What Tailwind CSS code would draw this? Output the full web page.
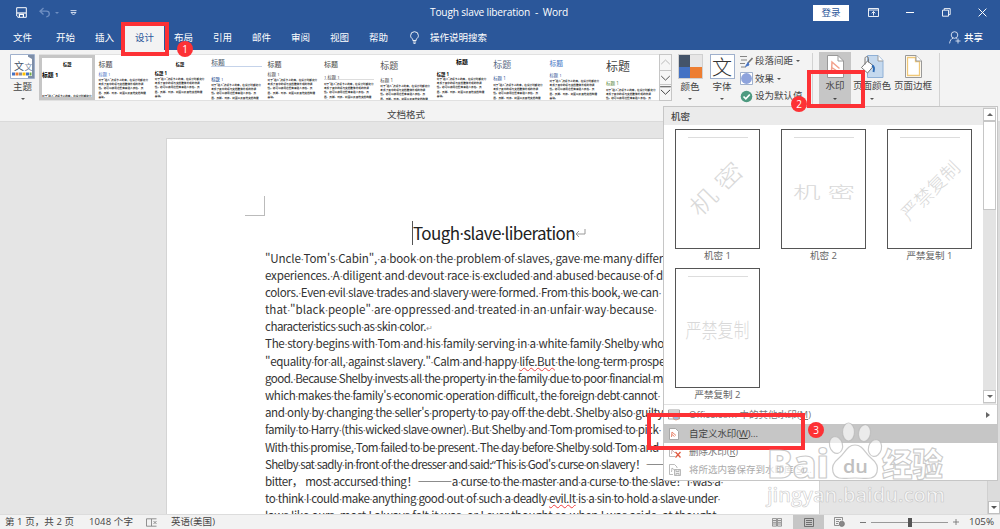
<!DOCTYPE html>
<html lang="zh-CN">
<head>
    <meta charset="UTF-8">
    <meta name="viewport" content="width=device-width, initial-scale=1.0">
    <script src="https://cdn.jsdelivr.net/npm/@tailwindcss/browser@4"></script>
    <title>Tough slave liberation - Word</title>
</head>
<body class="font-['Open_Sans','Noto_Sans_CJK_SC',sans-serif] text-[9.5px] leading-[12px] text-[#444]">
<div class="relative w-[1000px] h-[529px] overflow-hidden flex flex-col bg-[#e5e5e5]">

    <!-- Title bar -->
    <header class="h-[25px] shrink-0 bg-[#2b579a] text-white flex items-center relative">
        <svg class="ml-4 w-[11px] h-[11px]" viewBox="0 0 11 11" fill="none" stroke="#fff"><path d="M.7.7h9.6v9.6H2L.7 9z"/><path d="M1 6h9" stroke-width="1.2"/><path d="M3.4 10V7.3h4V10" stroke-width="1.2"/></svg>
        <svg class="ml-[12px] w-[12px] h-[11px]" viewBox="0 0 12 11" fill="none" stroke="#6f8fc2" stroke-width="1.3"><path d="M4.5 1 1 4.2l3.5 3.2M1 4.2h6.3c4 0 4 5.6 0 5.6"/></svg>
        <span class="ml-[4px] border-x-2 border-x-transparent border-t-2 border-t-[#6f8fc2]"></span>
        <svg class="ml-[11px] w-[7px] h-[6px]" viewBox="0 0 7 6" fill="none" stroke="#dfe7f5" stroke-width=".9"><path d="M.5.6h6M1 2.5h5L3.500 5z"/></svg>
        <span class="absolute left-[430px] top-[6px] text-[10.2px] whitespace-pre" data-fit="138">Tough slave liberation  -  Word</span>
        <div class="ml-auto flex items-center">
            <button class="bg-white text-[#2b579a] w-[36px] h-[16px] mr-[19px] text-[9.5px]">登录</button>
            <svg class="w-[11px] h-[9px] mr-[27px]" viewBox="0 0 11 9" fill="none" stroke="#fff" stroke-width=".9"><path d="M.5.5h10v8H.5zM.5 2h10M5.500 7.500V3.600M3.700 5.300l1.800-1.800 1.800 1.800"/></svg>
            <svg class="w-[8px] h-[9px] mr-[28px]" viewBox="0 0 8 9" stroke="#fff"><path d="M0 4.500h8"/></svg>
            <svg class="w-[9px] h-[9px] mr-[27px]" viewBox="0 0 9 9" fill="none" stroke="#fff" stroke-width=".9"><path d="M.5 2.200h6v6h-6zM2.200 2V.6h6v6H6.800"/></svg>
            <svg class="w-[9px] h-[9px] mr-[13px]" viewBox="0 0 9 9" stroke="#fff"><path d="m.6.6 7.800 7.800M8.400.6.6 8.400"/></svg>
        </div>
    </header>

    <!-- Tabs -->
    <nav class="h-[25px] shrink-0 bg-[#2b579a] text-white flex items-stretch leading-[25px]">
        <a class="ml-[13px] w-[43px]">文件</a>
        <a class="w-[39px]">开始</a>
        <a class="w-[30px]">插入</a>
        <a class="w-[39px] bg-[#f3f3f3] text-[#2b579a] text-center">设计</a>
        <a class="ml-[10px] w-[39px]">布局</a>
        <a class="w-[39px]">引用</a>
        <a class="w-[39px]">邮件</a>
        <a class="w-[39px]">审阅</a>
        <a class="w-[39px]">视图</a>
        <a class="w-[41px]">帮助</a>
        <svg class="self-center w-[9px] h-[13px] mr-[11px]" viewBox="0 0 9 13" fill="none" stroke="#fff" stroke-width=".9"><path d="M2.800 9.500V8.300C1.500 7.300.6 6.200.6 4.600a3.900 3.900 0 0 1 7.800 0c0 1.600-.9 2.700-2.200 3.700v1.200zM2.900 11h3.200M3.500 12.400h2"/></svg>
        <span>操作说明搜索</span>
        <svg class="ml-auto self-center w-[12px] h-[13px] mr-[3px]" viewBox="0 0 12 13" fill="none" stroke="#dfe7f5" stroke-width=".9"><circle cx="5.500" cy="4" r="3.300"/><path d="M.6 12.400c.3-3 1.800-4.900 3.600-5.300M6.800 7.100l1 .8M9 7.500v5M6.500 10h5"/></svg>
        <span class="mr-[17px] font-medium">共享</span>
    </nav>

    <!-- Ribbon -->
    <section class="h-[72px] shrink-0 bg-[#f3f3f3] border-b border-[#dadada] flex items-start">
        <div class="ml-[10px] w-[25px] mt-[4px] flex flex-col items-center">
            <svg class="w-[25px] h-[25px]" viewBox="0 0 25 25"><path d="M.5.5h24v24H.5z" fill="#fff" stroke="#9fb0cc"/><path d="M18 1h6v23h-6z" fill="#7d8ea8"/><path d="M15 1l7 4v17H15z" fill="#fff"/><text x="4" y="16" font-size="10" fill="#44546a" font-family="Noto Sans CJK SC">文</text><text x="14.500" y="16" font-size="8" fill="#7588a4" font-family="Noto Sans CJK SC">文</text><path d="M2 18.500h3v3H2z" fill="#4472c4"/><path d="M5.500 18.500h3v3h-3z" fill="#ed7d31"/><path d="M9 18.500h3v3H9z" fill="#8a8f98"/><path d="M12.500 18.500h3v3h-3z" fill="#ffc000"/><path d="M16 18.500h3v3h-3z" fill="#4472c4"/><path d="M19.500 18.500h2v3h-2z" fill="#70ad47"/></svg>
            <span class="mt-[2px]">主题</span>
            <span class="mt-[5px] border-x-2 border-x-transparent border-t-2 border-t-[#555]"></span>
        </div>
        <div class="ml-[4px] w-[620px]">
            <div class="mt-[4px] h-[47px] flex bg-white border-y border-[#e1e1e1] overflow-hidden" id="gallery"></div>
            <div class="mt-[8px] pl-[348px] text-[9.5px]">文档格式</div>
        </div>
        <div class="mt-[4px] w-[13px] h-[47px] border border-[#c6c6c6] bg-[#f6f6f6] flex flex-col divide-y divide-[#c6c6c6]">
            <svg class="h-[16px]" viewBox="0 0 11 16" fill="none" stroke="#b5b5b5"><path d="m.8 10 4.700-4.500L10.200 10"/></svg>
            <svg class="h-[15px]" viewBox="0 0 11 15" fill="none" stroke="#444"><path d="m.8 5.500 4.700 4.500 4.700-4.500"/></svg>
            <svg class="h-[15px]" viewBox="0 0 11 15" fill="none" stroke="#444"><path d="M0 1.800h11M.8 5l4.700 4.500L10.200 5"/></svg>
        </div>
        <div class="ml-[5px] w-[26px] mt-[4px] flex flex-col items-center">
            <div class="grid grid-cols-2 w-[25px] h-[25px] border border-[#d0d0d0]">
                <i class="bg-[#44546a]"></i><i class="bg-[#e7e6e6]"></i><i class="bg-[#4472c4]"></i><i class="bg-[#ed7d31]"></i>
            </div>
            <span class="mt-[2px]">颜色</span>
            <span class="mt-[5px] border-x-2 border-x-transparent border-t-2 border-t-[#555]"></span>
        </div>
        <div class="ml-[6px] w-[26px] mt-[4px] flex flex-col items-center">
            <div class="w-[25px] h-[25px] border border-[#9fb0cc] bg-white text-[20px] leading-[23px] text-center text-[#333] font-light"><span class="font-['Noto_Sans_CJK_SC',sans-serif]">文</span></div>
            <span class="mt-[2px]">字体</span>
            <span class="mt-[5px] border-x-2 border-x-transparent border-t-2 border-t-[#555]"></span>
        </div>
        <div class="ml-[5px] mt-[2px] w-[72px] flex flex-col whitespace-nowrap">
            <div class="h-[18px] flex items-center">
                <svg class="w-[13px] h-[13px] mr-[2px]" viewBox="0 0 13 13" fill="none" stroke="#777" stroke-width=".9"><path d="M0 1.500h7M1 5h6M0 8.500h5M1 12h5"/><path d="M12.500 3 8 8" stroke-width="1.600"/><path d="M8 7.500 5.500 11.500 9 10z" fill="#4472c4" stroke="#4472c4"/></svg>
                段落间距<span class="ml-[3px] border-x-2 border-x-transparent border-t-2 border-t-[#555]"></span>
            </div>
            <div class="h-[17px] flex items-center">
                <svg class="w-[13px] h-[13px] mr-[2px]" viewBox="0 0 13 13"><path d="M.5.5h12v12H.5z" fill="#fff" stroke="#9fb0cc"/><circle cx="6.500" cy="6.500" r="5.400" fill="#8ea3dc"/></svg>
                效果<span class="ml-[3px] border-x-2 border-x-transparent border-t-2 border-t-[#555]"></span>
            </div>
            <div class="h-[18px] flex items-center">
                <svg class="w-[13px] h-[13px] mr-[2px]" viewBox="0 0 13 13"><circle cx="6.500" cy="6.500" r="5.800" fill="#4e9a80"/><path d="m3.500 6.500 2.300 2.300 4-4.300" fill="none" stroke="#fff" stroke-width="1.700"/></svg>
                设为默认值
            </div>
        </div>
        <div class="mt-[3px] h-[54px] border-l border-[#d2d2d2]"></div>
        <div class="ml-[6px] mt-[2px] w-[32px] h-[54px] bg-[#c6c6c6] flex flex-col items-center">
            <svg class="mt-[3px] w-[17px] h-[23px]" viewBox="0 0 17 23"><path d="M.5.5H11l5.500 5.500v16.500H.5z" fill="#fff" stroke="#999"/><path d="M11 .5V6h5.500" fill="none" stroke="#999"/><path d="M4.500 17 5 7l7.500 6.500M4.800 12.500l4.500 3" fill="none" stroke="#f2a18c" stroke-width="1.500"/></svg>
            <span class="mt-[2px]">水印</span>
            <span class="mt-[6px] border-x-2 border-x-transparent border-t-2 border-t-[#444]"></span>
        </div>
        <div class="ml-px w-[40px] mt-[2px] flex flex-col items-center whitespace-nowrap">
            <svg class="mt-[3px] w-[24px] h-[23px]" viewBox="0 0 24 23"><path d="M7.500.5H18l5 5v17H7.500z" fill="#c5d9ee" stroke="#8fb0d6"/><path d="M18 .5V6h5" fill="#fff" stroke="#999"/><path d="m1.500 12.500 6-6.500 6 5-6 7z" fill="#fff" stroke="#777"/><path d="M5 9.500V3.500c0-2.500 3.500-2.500 3.500 0v4" fill="none" stroke="#777"/><path d="M12 10.500c2.500 1 2.500 3 1.500 6.500" fill="none" stroke="#2f6cb5" stroke-width="2"/></svg>
            <span class="mt-[2px]">页面颜色</span>
            <span class="mt-[6px] border-x-2 border-x-transparent border-t-2 border-t-[#555]"></span>
        </div>
        <div class="ml-px w-[40px] mt-[2px] flex flex-col items-center whitespace-nowrap">
            <svg class="mt-[3px] w-[17px] h-[23px]" viewBox="0 0 17 23"><path d="M.5.5H11l5.500 5.500v16.500H.5z" fill="#fff" stroke="#999"/><path d="M2.500 2.500h8v4h4v14h-12z" fill="none" stroke="#f0c878" stroke-width="1.300"/><path d="M11 .5V6h5.500" fill="#fff" stroke="#999"/></svg>
            <span class="mt-[2px]">页面边框</span>
        </div>
        <div class="ml-[6px] mt-[3px] h-[54px] border-l border-[#d2d2d2]"></div>
    </section>

    <!-- Document -->
    <main class="flex-1 min-h-0 flex overflow-hidden">
        <article class="ml-[166px] mt-[16px] w-[654px] bg-white border border-b-0 border-[#d4d4d4] shrink-0 overflow-hidden text-[#333] font-['Noto_Sans_CJK_SC',sans-serif]">
            <div class="ml-[78px] mt-[57px] w-[20px] h-[20px] border-r border-b border-[#bbb]"></div>
            <h1 class="ml-[245px] mt-[5px] h-[24px] flex items-center border-l border-[#555] text-[17px] leading-[24px] text-[#222]"><span data-fit="162" class="whitespace-pre">Tough<b class="font-normal font-['Open_Sans']">·</b>slave<b class="font-normal font-['Open_Sans']">·</b>liberation</span><svg class="w-[11px] h-[9px]" viewBox="0 0 11 9" fill="none" stroke="#999"><path d="M10 0v5H1M4 2 1 5l3 3"/></svg></h1>
            <div class="ml-[98px] mt-[4.500px] text-[11.6px]" id="doc"></div>
        </article>
        <div class="ml-auto w-[13px] bg-[#dcdcdc] border-l border-[#d0d0d0] flex flex-col justify-end">
            <div class="h-[13px] bg-white border border-[#c0c0c0] flex items-center justify-center"><span class="border-x-3 border-x-transparent border-t-3 border-t-[#555]"></span></div>
        </div>
    </main>

    <!-- Status bar -->
    <footer class="h-[15px] shrink-0 bg-[#f2f2f2] border-t border-[#dcdcdc] flex items-center whitespace-nowrap">
        <span class="ml-[5px] w-[84px]"><span data-fit="69" class="inline-block">第 1 页，共 2 页</span></span>
        <span class="w-[57px]"><span data-fit="44" class="inline-block">1048 个字</span></span>
        <svg class="w-[12px] h-[9px] mr-[13px]" viewBox="0 0 12 9" fill="none" stroke="#777" stroke-width=".8"><path d="M.5.8h5v7.400h-5zM5.500.8h5M5.500 8.200h5M7.500 3l3 3M10.500 3l-3 3"/></svg>
        <span data-fit="44" class="inline-block">英语(美国)</span>
        <div class="ml-auto flex items-center h-full">
            <svg class="w-[10px] h-[9px] mr-[11px]" viewBox="0 0 10 9" fill="none" stroke="#777" stroke-width=".8"><path d="M.4.600h4.200v7.500H.4zM5.400.600h4.200v7.500H5.400zM1 2.500h3M1 4.300h3M1 6h3M6 2.500h3M6 4.300h3M6 6h3"/></svg>
            <div class="w-[31px] h-full bg-[#c6c6c6] flex items-center justify-center">
                <svg class="w-[10px] h-[9px]" viewBox="0 0 10 9" fill="none" stroke="#666" stroke-width=".9"><path d="M.5.5h9v8h-9zM2 2.500h6M2 4.500h6M2 6.500h6"/></svg>
            </div>
            <svg class="ml-[10px] w-[11px] h-[10px]" viewBox="0 0 11 10" fill="none" stroke="#777" stroke-width=".8"><path d="M5 8.500H.5v-8h8v3M2 2.500h5M2 4.500h3M2 6.500h2"/><circle cx="7.800" cy="6.800" r="2.600" fill="#888"/></svg>
            <span class="ml-[15px] w-[6px] border-t border-[#777]"></span>
            <div class="ml-[5px] w-[77px] h-[9px] flex items-center relative"><span class="w-full border-t border-[#999]"></span><span class="absolute left-[37px] w-[4px] h-[9px] bg-[#555]"></span></div>
            <svg class="ml-[5px] w-[6px] h-[6px]" viewBox="0 0 6 6" stroke="#777" stroke-width=".9"><path d="M0 3h6M3 0v6"/></svg>
            <span class="ml-[10px] mr-[6px] text-[9.8px]" data-fit="25">105%</span>
        </div>
    </footer>

    <!-- Watermark menu -->
    <div class="absolute left-[663px] top-[106px] w-[335px] h-[375px] bg-white border border-[#c6c6c6] flex flex-col whitespace-nowrap">
        <div class="h-[298px] flex border-b border-[#e1e1e1]">
            <div class="w-[319px]">
                <div class="h-[18px] bg-[#ebebeb] pl-[7px] leading-[19px] font-medium text-[#444]">机密</div>
                <div class="grid grid-cols-[106px_106px_106px] auto-rows-[139px] pl-[11px] pt-[4px] text-[#666]" id="cards"></div>
            </div>
            <div class="w-[13px] ml-auto mr-px bg-[#e3e3e3] flex flex-col">
                <div class="mt-px h-[13px] bg-white border border-[#c6c6c6] flex items-center justify-center"><span class="border-x-3 border-x-transparent border-b-3 border-b-[#666]"></span></div>
                <div class="h-[89px] bg-white border border-[#c6c6c6]"></div>
                <div class="mt-auto mb-px h-[13px] bg-white border border-[#c6c6c6] flex items-center justify-center"><span class="border-x-3 border-x-transparent border-t-3 border-t-[#666]"></span></div>
            </div>
        </div>
        <div class="h-[19px] flex items-center pl-[4px] text-[#777]">
            <svg class="w-[12px] h-[12px] mr-[9px]" viewBox="0 0 12 12" fill="none" stroke="#999" stroke-width=".9"><path d="M.5 1h11v9H.5zM.5 3h11M2 5h4M2 7h3"/><circle cx="8" cy="8" r="3" fill="#9db8de" stroke="#d99a80"/></svg>
            <span data-fit="122">Office.com 中的其他水印(<u>M</u>)</span>
            <span class="ml-auto mr-[7px] border-y-3 border-y-transparent border-l-4 border-l-[#666]"></span>
        </div>
        <div class="h-[19px] flex items-center pl-[5px] bg-[#c6c6c6]">
            <svg class="w-[10px] h-[12px] mr-[10px]" viewBox="0 0 10 12"><path d="M.5.500h6l3 3v8h-9z" fill="#fff" stroke="#999" stroke-width=".8"/><path d="m2.500 9 .5-5 4 3.500M3 6.500l2.500 2" fill="none" stroke="#e8846c"/></svg>
            <span data-fit="69">自定义水印(<u>W</u>)...</span>
        </div>
        <div class="h-[18px] flex items-center pl-[5px] text-[#777]">
            <svg class="w-[12px] h-[12px] mr-[8px]" viewBox="0 0 12 12" fill="none"><path d="M8 4V.500H.5v10H6" stroke="#aaa" stroke-width=".8"/><path d="m2.500 8 .5-4 3 3" stroke="#c9a0a0" stroke-width=".8"/><path d="m6.500 6 5 5.500M11.500 6l-5 5.500" stroke="#e05a40" stroke-width="1.300"/></svg>
            <span data-fit="49">删除水印(<u>R</u>)</span>
        </div>
        <div class="h-[18px] flex items-center pl-[5px] text-[#aaa]">
            <svg class="w-[12px] h-[12px] mr-[8px]" viewBox="0 0 12 12" fill="none" stroke="#aaa" stroke-width=".8"><path d="M8 4V3L5.500.500h-5v10H4M2.500 8 3 4l3 2.500"/><path d="M5.500 5.500h6v6h-6z" fill="#eee"/><path d="M7 5.500v2h3v-2M7 11.500v-2h3v2"/></svg>
            <span>将所选内容保存到水印库(<u>S</u>)...</span>
        </div>
    </div>

    <!-- Annotations -->
    <div class="absolute left-[121px] top-[22px] w-[48px] h-[34px] border-4 border-[#fd3135]"></div>
    <div class="absolute left-[807px] top-[70px] w-[58px] h-[38px] border-4 border-[#fd3135]"></div>
    <div class="absolute left-[647px] top-[413px] w-[158px] h-[37px] border-4 border-[#fd3135]"></div>
    <div class="absolute left-[177px] top-[41px] size-[16px] rounded-full bg-[#fd3135] text-white text-[10px] leading-[16px] text-center">1</div>
    <div class="absolute left-[791px] top-[96px] size-[16px] rounded-full bg-[#fd3135] text-white text-[10px] leading-[16px] text-center">2</div>
    <div class="absolute left-[808px] top-[422px] size-[16px] rounded-full bg-[#fd3135] text-white text-[10px] leading-[16px] text-center">3</div>

    <!-- Site logo -->
    <svg class="absolute left-[760px] top-[415px] w-[200px] h-[100px]" viewBox="0 0 200 100" font-family="Open Sans, Noto Sans CJK SC, sans-serif" font-weight="800" stroke-linejoin="round">
        <g fill="#fff" fill-opacity=".65" stroke="#b9b9b9" stroke-opacity=".75" stroke-width="1.200">
            <text x="7" y="63" font-size="38" textLength="62" lengthAdjust="spacingAndGlyphs">Bai</text>
            <ellipse cx="88.500" cy="17" rx="6" ry="9"/>
            <ellipse cx="104.500" cy="18" rx="6" ry="8.500" transform="rotate(10 104 18)"/>
            <ellipse cx="76" cy="30" rx="6.500" ry="8.500" transform="rotate(-15 76 30)"/>
            <ellipse cx="115" cy="33" rx="6.500" ry="8.500" transform="rotate(15 115 33)"/>
            <path d="M95 30c8 0 10 8 16 13 5 4 8 8 6 14-3 9-12 6-22 6s-19 3-22-6c-2-6 1-10 6-14 6-5 8-13 16-13z"/>
            <text x="122" y="61" font-size="32" textLength="61" lengthAdjust="spacingAndGlyphs">经验</text>
            <text x="7" y="87" font-size="19" stroke-width=".6" font-weight="600" textLength="178" lengthAdjust="spacingAndGlyphs">jingyan.baidu.com</text>
        </g>
        <text x="83" y="58" font-size="18" font-weight="600" fill="#c0c0c0" textLength="25" lengthAdjust="spacingAndGlyphs">du</text>
    </svg>
</div>

<script>
    // [width of the line, text]; ~word~ gets the spelling squiggle
    const lines = [
        [398, '"Uncle Tom\'s Cabin", a book on the problem of slaves, gave me many differ'],
        [398, 'experiences. A diligent and devout race is excluded and abused because of d'],
        [396, 'colors. Even evil slave trades and slavery were formed. From this book, we can '],
        [392, 'that "black people" are oppressed and treated in an unfair way because '],
        [161, 'characteristics such as skin color.¶'],
        [399, 'The story begins with Tom and his family serving in a white family Shelby who'],
        [400, '"equality for all, against slavery." Calm and happy ~life.But~ the long-term prospe'],
        [398, 'good. Because Shelby invests all the property in the family due to poor financial m'],
        [395, 'which makes the family\'s economic operation difficult, the foreign debt cannot '],
        [398, 'and only by changing the seller\'s property to pay off the debt. Shelby also guilty'],
        [396, 'family to Harry (this wicked slave owner). But Shelby and Tom promised to pick '],
        [396, 'With this promise, Tom failed to be present. The day before Shelby sold Tom and '],
        [402, 'Shelby sat sadly in front of the dresser and said:“This is God\'s curse on slavery！——'],
        [457, 'bitter， most accursed thing！———a curse to the master and a curse to the slave！I was a '],
        [455, 'to think I could make anything good out of such a deadly ~evil.It~ is a sin to hold a slave under '],
        [457, 'laws like ours, most I always felt it was, or I ever thought so when I was aside, at thought. ']
    ];
    const doc = document.getElementById('doc');
    doc.innerHTML = lines.map(([width, text]) => `
        <div class="h-[17.2px] leading-[17.2px] whitespace-pre"><span class="inline-block" data-line="${width}">${text
            .replace(/([^，]) /g, '$1<b class="inline-block w-0 font-normal text-[#777] font-[\'Open_Sans\']">·</b> ')
            .replace(/“/, '<b class="font-normal font-[\'Open_Sans\']">“</b>')
            .replace(/~(.+?)~/g, '<u class="decoration-wavy decoration-[#f04040] decoration-[0.5px] underline-offset-1">$1</u>')
            .replace('¶', '<b class="inline-block w-0 font-normal text-[8px] text-[#999]">↵</b>')}</span></div>`).join('');

    const sample = '对于"插入"选项卡上的库，在设计时都充分考虑了其中的项与文档整体外观的协调性。您可以使用这些库来插入表格、页眉、页脚、列表、封面以及其他文档构建基块。';
    // [title size, title centre, heading size, heading centre, top of the text, title class, heading class]
    const styles = [
        [4.2, 10, 5.8, 21, 39, 'font-bold text-center text-black', 'font-bold text-black'],
        [7, 9, 4.3, 19.5, 23, '', 'text-[#4472c4]'],
        [4.2, 10, 4.3, 18.5, 22, 'font-bold text-center text-black', 'font-bold text-black'],
        [6.8, 8, 4.3, 23, 27, 'text-[#44546a] border-b border-[#c5d3ea]', 'text-[#2f5496] font-medium'],
        [7, 9, 4.3, 19.5, 23, '', ''],
        [7, 9, 4.3, 22, 26, '', 'border-b border-[#ddd]'],
        [9, 10, 4.5, 25, 29, 'text-[#555]', ''],
        [5.9, 8, 4.3, 19, 22, 'font-bold text-center text-black', 'font-bold text-black'],
        [9, 9, 4.5, 23, 28, 'text-[#5b6b85]', 'text-[#2f5496]'],
        [6.8, 9, 4.3, 20.5, 24, 'text-[#4472c4]', 'text-[#2f5496]'],
        [12, 12, 4.6, 28.5, 33, '', 'text-[#548235]']
    ];
    document.getElementById('gallery').innerHTML = styles.map(([ts, ty, hs, hy, by, title, head], i) => `
        <div class="w-[56.4px] shrink-0 h-full overflow-hidden flex flex-col px-[3px] ${i ? '' : 'outline-3 -outline-offset-3 outline-[#c6c6c6]'}">
            <div class="${title} leading-none" style="font-size:${ts}px;margin-top:${ty - ts / 2}px">标题</div>
            <div class="${head} leading-none" style="font-size:${hs}px;margin-top:${hy - hs / 2 - ty - ts / 2}px">${i === 5 ? '1 标题 1' : '标题 1'}</div>
            <div class="text-[2.65px] leading-[4.2px] font-medium text-black w-[50px]" style="margin-top:${by - hy - hs / 2}px">${sample}</div>
        </div>`).join('');

    const cards = [
        ['机密 1', '机 密', 'text-[26px] mb-[6px] -rotate-45 scale-x-[1.1] scale-y-[.9]'],
        ['机密 2', '机 密', 'text-[24px] scale-x-[1.15] scale-y-[.68]'],
        ['严禁复制 1', '严禁复制', 'text-[18.500px] mb-[4px] ml-[4px] -rotate-45'],
        ['严禁复制 2', '严禁复制', 'text-[16px] mb-[3px] scale-y-[1.3]']
    ];
    document.getElementById('cards').innerHTML = cards.map(([name, mark, cls]) => `
        <div class="w-[85px] text-center">
            <div class="w-[85px] h-[120px] border border-[#555] bg-white flex flex-col items-center">
                <div class="mt-[7px] w-[60px] border-t border-[#ddd]"></div>
                <div class="flex-1 flex items-center text-[#d9d9d9] font-light leading-none"><span class="${cls} font-['Liberation_Serif','Noto_Sans_CJK_SC',serif]">${mark}</span></div>
            </div>
            <div class="mt-px">${name}</div>
        </div>`).join('');

    function fit() {
        document.querySelectorAll('[data-line]').forEach(el => {
            el.style.wordSpacing = el.style.letterSpacing = '0px';
            const text = el.textContent.replace(/[·↵]/g, '');
            const gaps = text.split(' ').length - 1;
            const extra = el.dataset.line - el.getBoundingClientRect().width;
            const word = Math.max(extra / gaps * 0.8, 0.4);
            el.style.wordSpacing = word + 'px';
            el.style.letterSpacing = (extra - word * gaps) / text.length + 'px';
            el.querySelectorAll('b').forEach(b => b.style.letterSpacing = '0px');
        });
        // squeeze labels to their column
        document.querySelectorAll('[data-fit]').forEach(el => {
            el.style.letterSpacing = '0px';
            const w = el.getBoundingClientRect().width;
            el.style.letterSpacing = (el.dataset.fit - w) / el.textContent.length + 'px';
        });
    }
    window.addEventListener('load', () => requestAnimationFrame(fit));
</script>
</body>
</html>
